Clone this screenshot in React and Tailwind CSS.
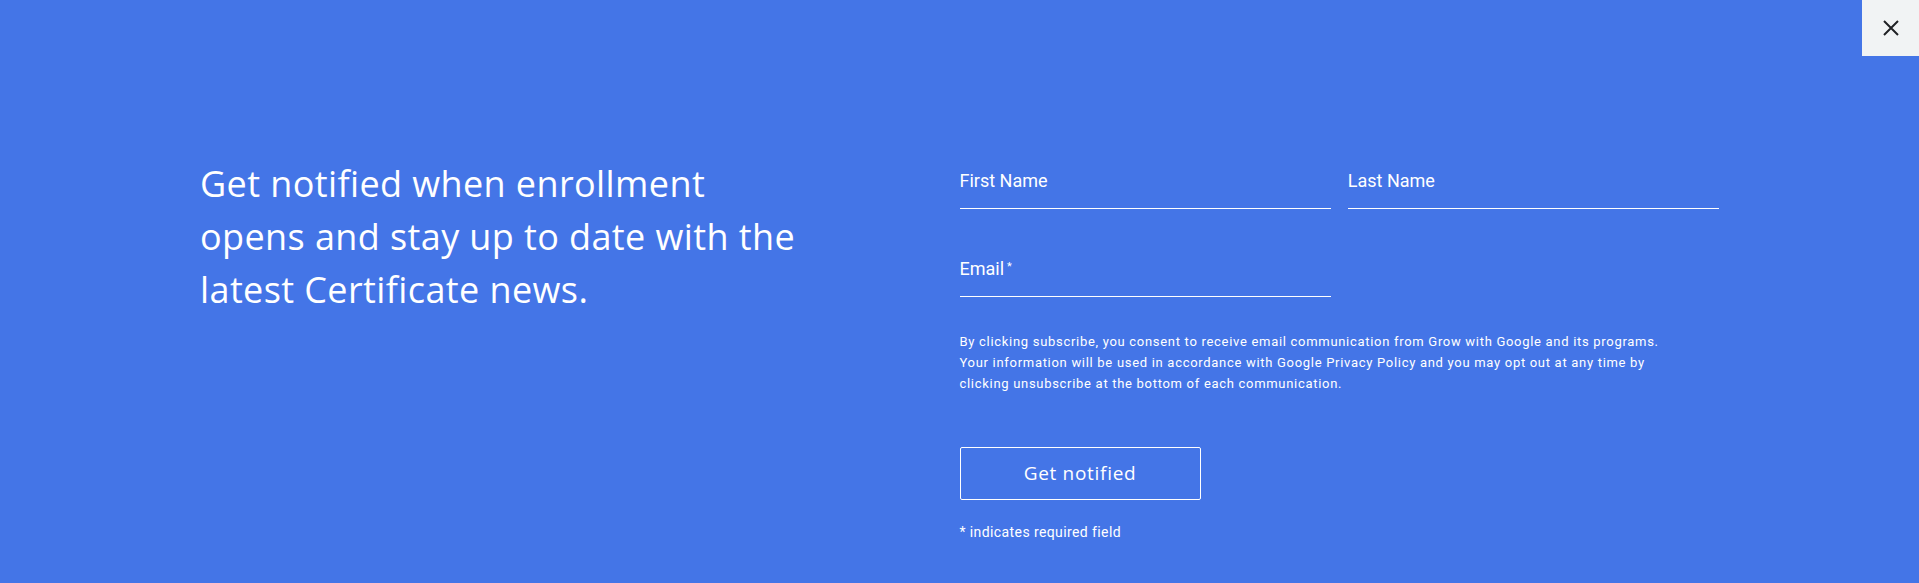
import React from 'react';

const HEAD_FONT = { fontFamily: '"Open Sans", "Liberation Sans", sans-serif' };

function Field({ label, required }) {
  return (
    <div className="flex flex-col border-b border-white pb-[15px]">
      <label className="text-[18px] leading-[24px] text-white">
        {label}
        {required && <sup className="ml-[3px] text-[11px]">*</sup>}
      </label>
    </div>
  );
}

export default function App() {
  return (
    <div
      className="relative h-[583px] overflow-hidden bg-[#4475e7] text-white"
      style={{ fontFamily: 'Roboto, "Liberation Sans", sans-serif' }}
    >
      {/* close */}
      <button className="absolute top-0 right-0 flex h-[56px] w-[57px] items-center justify-center bg-[#f1f3f4]">
        <svg width="18" height="18" viewBox="0 0 18 18" fill="none">
          <path d="M2 2L16 16M16 2L2 16" stroke="#202124" strokeWidth="2" />
        </svg>
      </button>

      <div className="grid grid-cols-2 px-[200px] pt-[157px]">
        <h2
          className="max-w-[605px] text-[36px] leading-[53px] font-normal tracking-[0.4px] text-white"
          style={HEAD_FONT}
        >
          Get notified when enrollment opens and stay up to date with the latest Certificate news.
        </h2>

        <form className="pt-[12px]" onSubmit={(e) => e.preventDefault()}>
          <div className="grid grid-cols-2 gap-x-[17px] gap-y-[48px]">
            <Field label="First Name" />
            <Field label="Last Name" />
            <Field label="Email" required />
          </div>

          <p className="mt-[34px] max-w-[725px] text-[13px] leading-[21px] tracking-[0.7px] text-white">
            By clicking subscribe, you consent to receive email communication from Grow with Google and its programs.
            Your information will be used in accordance with Google Privacy Policy and you may opt out at any time by
            clicking unsubscribe at the bottom of each communication.
          </p>

          <button
            type="submit"
            className="mt-[53px] flex h-[53px] w-[241px] items-center justify-center rounded-[2px] border border-white text-[19px] tracking-[0.7px] text-white"
            style={HEAD_FONT}
          >
            Get notified
          </button>

          <p className="mt-[22px] text-[14px] leading-[21px] tracking-[0.4px] text-white">
            * indicates required field
          </p>
        </form>
      </div>
    </div>
  );
}
